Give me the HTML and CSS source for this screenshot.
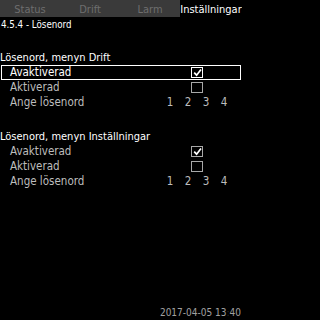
FILE: index.html
```html
<!DOCTYPE html>
<html lang="sv">
<head>
<meta charset="utf-8">
<title>Lösenord</title>
<link rel="stylesheet" href="styles.css">
</head>
<body>
<div class="screen">
  <nav class="tabs">
    <div class="tab">Status</div>
    <div class="tab">Drift</div>
    <div class="tab">Larm</div>
    <div class="tab active">Inställningar</div>
  </nav>
  <div class="crumb">4.5.4 - Lösenord</div>

  <section class="group">
    <div class="title">Lösenord, menyn Drift</div>
    <div class="row selected">
      <span class="label">Avaktiverad</span>
      <span class="check checked"><svg viewBox="0 0 9 9" width="9" height="9"><path d="M1.2 4.6 L3.6 7.2 L8 1.4" fill="none" stroke="#fff" stroke-width="1.7"/></svg></span>
    </div>
    <div class="row">
      <span class="label">Aktiverad</span>
      <span class="check"></span>
    </div>
    <div class="row">
      <span class="label">Ange lösenord</span>
      <span class="digit">1</span><span class="digit">2</span><span class="digit">3</span><span class="digit">4</span>
    </div>
  </section>

  <section class="group second">
    <div class="title">Lösenord, menyn Inställningar</div>
    <div class="row">
      <span class="label">Avaktiverad</span>
      <span class="check checked"><svg viewBox="0 0 9 9" width="9" height="9"><path d="M1.2 4.6 L3.6 7.2 L8 1.4" fill="none" stroke="#fff" stroke-width="1.7"/></svg></span>
    </div>
    <div class="row">
      <span class="label">Aktiverad</span>
      <span class="check"></span>
    </div>
    <div class="row">
      <span class="label">Ange lösenord</span>
      <span class="digit">1</span><span class="digit">2</span><span class="digit">3</span><span class="digit">4</span>
    </div>
  </section>

  <div class="clock">2017-04-05 13<span class="colon">:</span>40</div>
</div>
</body>
</html>
```
FILE: styles.css
```css
html, body {
  margin: 0;
  padding: 0;
  background: #000;
}
.screen {
  width: 242px;
  height: 320px;
  display: flex;
  flex-direction: column;
  background: #000;
  color: #fff;
  font-family: "DejaVu Sans Condensed", "DejaVu Sans", sans-serif;
  font-size: 11px;
  overflow: hidden;
}
.tabs {
  display: grid;
  grid-template-columns: 60px 60px 60px 62px;
  height: 17px;
  background: #3a3a3a;
}
.tab {
  box-sizing: border-box;
  height: 17px;
  padding-top: 2px;
  line-height: 15px;
  text-align: center;
  color: #6e6e6e;
  white-space: nowrap;
}
.tab.active {
  background: #000;
  color: #fff;
}
.crumb {
  margin-top: 2px;
  padding-left: 1px;
  font-size: 9.7px;
  line-height: 12px;
  color: #fff;
}
.group {
  margin-top: 20px;
}
.title {
  line-height: 14px;
  color: #fff;
  white-space: nowrap;
}
.row {
  box-sizing: border-box;
  height: 15px;
  margin: 0 1px;
  border: 1px solid transparent;
  display: grid;
  grid-template-columns: 1fr 18px 18px 18px 18px;
  padding-right: 7px;
  align-items: center;
  font-size: 11.5px;
  line-height: 13px;
  color: #bdbdbd;
}
.row.selected {
  border-color: #fff;
  color: #fff;
}
.label {
  grid-column: 1;
  padding-left: 8px;
  white-space: nowrap;
}
.digit {
  text-align: center;
}
.check {
  grid-column: 3 / 5;
  justify-self: center;
  box-sizing: border-box;
  width: 12px;
  height: 11px;
  border: 1px solid #a8a8a8;
  display: flex;
  align-items: center;
  justify-content: center;
}
.row.selected .check {
  border-color: #fff;
}
.check svg {
  display: block;
}
.clock {
  margin-top: auto;
  padding: 0 1px 1px 0;
  text-align: right;
  font-size: 10px;
  line-height: 12px;
  color: #a0a0a0;
}
.colon {
  color: #2a2a2a;
}
```
